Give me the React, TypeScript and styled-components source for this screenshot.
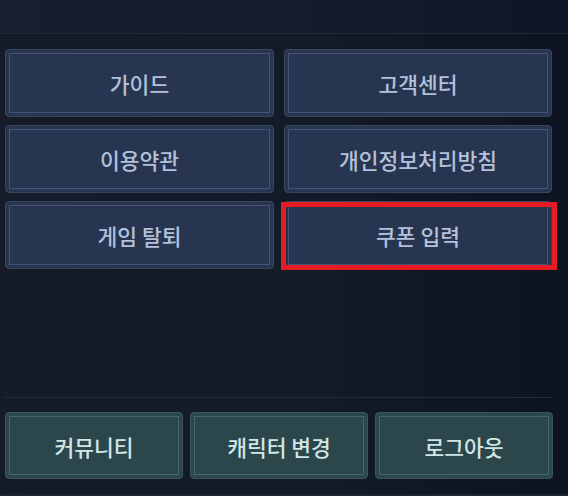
import styled, { createGlobalStyle } from "styled-components";

const GlobalStyle = createGlobalStyle`
    html, body {
        margin: 0;
        padding: 0;
        background: #121826;
    }
    body {
        font-family: "Noto Sans CJK KR", "Noto Sans", sans-serif;
    }
`;

const Page = styled.div`
    width: 568px;
    height: 496px;
    display: flex;
    flex-direction: column;
    background: linear-gradient(90deg, #151b29 0%, #131a28 55%, #0d1320 100%);
    overflow: hidden;
`;

const TopBar = styled.div`
    height: 33px;
    border-bottom: 1px solid #1f2738;
    background: linear-gradient(90deg, #171e2d 0%, #141b2a 60%, #0e1526 100%);
`;

const Menu = styled.div`
    display: grid;
    grid-template-columns: 269px 268px;
    grid-auto-rows: 68px;
    column-gap: 10px;
    row-gap: 8px;
    padding: 15px 16px 0 5px;
`;

const Spacer = styled.div`
    flex: 1;
`;

const Footer = styled.div`
    margin: 0 16px 0 4px;
    border-top: 1px solid #222b3c;
    padding: 14px 0 0 1px;
    height: 82px;
    display: grid;
    grid-template-columns: 178px 178px 178px;
    column-gap: 7px;
    align-content: start;
`;

const BottomEdge = styled.div`
    height: 2px;
    background: #1c2535;
`;

const Button = styled.button<{ $teal?: boolean; $marked?: boolean }>`
    position: relative;
    display: flex;
    align-items: center;
    justify-content: center;
    height: ${(p) => (p.$teal ? "67px" : "68px")};
    border-radius: 4px;
    border: 1px solid ${(p) => (p.$teal ? "#3a5659" : "#3a4560")};
    background: ${(p) => (p.$teal ? "#2b474c" : "#273550")};
    box-shadow: inset 0 0 0 3px ${(p) => (p.$teal ? "#2b474c" : "#273550")},
        inset 0 0 0 4px ${(p) => (p.$teal ? "#44676b" : "#435477")};
    color: ${(p) => (p.$teal ? "#d2e6e6" : "#b3c1da")};
    font-family: "Noto Sans CJK KR", "Noto Sans", sans-serif;
    font-size: 21.5px;
    font-weight: 500;
    padding: 1px 0 0;
    cursor: pointer;

    ${(p) =>
        p.$marked &&
        `
        &::after {
            content: "";
            position: absolute;
            left: -4px;
            right: -6px;
            top: 0px;
            bottom: -2px;
            border: 5px solid #e81b24;
            pointer-events: none;
        }
    `}
`;

const menuItems = ["가이드", "고객센터", "이용약관", "개인정보처리방침", "게임 탈퇴", "쿠폰 입력"];
const footerItems = ["커뮤니티", "캐릭터 변경", "로그아웃"];

export default function App() {
    return (
        <>
            <GlobalStyle />
            <Page>
                <TopBar />
                <Menu>
                    {menuItems.map((label) => (
                        <Button key={label} $marked={label === "쿠폰 입력"}>
                            {label}
                        </Button>
                    ))}
                </Menu>
                <Spacer />
                <Footer>
                    {footerItems.map((label) => (
                        <Button key={label} $teal>
                            {label}
                        </Button>
                    ))}
                </Footer>
                <BottomEdge />
            </Page>
        </>
    );
}
